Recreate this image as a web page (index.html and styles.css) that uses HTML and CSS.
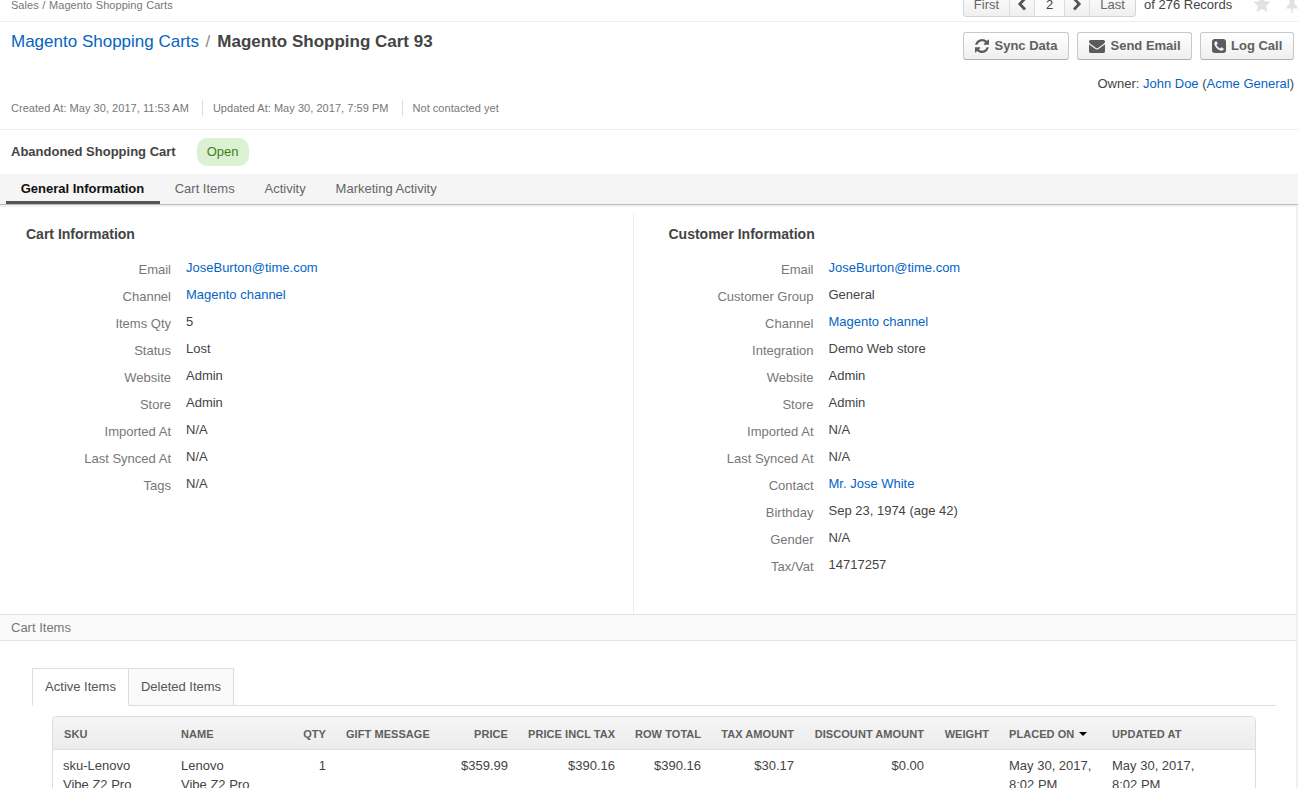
FILE: index.html
```html
<!DOCTYPE html>
<html lang="en">
<head>
<meta charset="utf-8">
<title>Magento Shopping Cart 93</title>
<link rel="stylesheet" href="styles.css">
</head>
<body>
<header class="topbar">
  <nav class="crumbs">Sales / Magento Shopping Carts</nav>
  <div class="pager">
    <div class="pager-group">
      <span class="pg pg-first">First</span>
      <span class="pg pg-arrow"><svg width="10" height="14" viewBox="0 0 10 14"><path d="M8 1.5 2.8 7 8 12.5" fill="none" stroke="#555" stroke-width="2.8"/></svg></span>
      <span class="pg pg-num">2</span>
      <span class="pg pg-arrow"><svg width="10" height="14" viewBox="0 0 10 14"><path d="M2 1.5 7.2 7 2 12.5" fill="none" stroke="#555" stroke-width="2.8"/></svg></span>
      <span class="pg pg-last">Last</span>
    </div>
    <span class="records">of 276 Records</span>
    <svg class="star" width="18" height="18" viewBox="0 0 18 18"><path d="M9 .5 11.6 6l6 .8-4.4 4.2 1.1 6L9 14.100 3.700 17l1.100-6L.4 6.800l6-.8z" fill="#e2e2e2"/></svg>
    <svg class="pin" width="12" height="18" viewBox="0 0 12 18"><path d="M2.500 1h7v1.500h-1v5.500q3 1.500 3.500 4.500H7l-.6 5h-.8l-.6-5H0q.5-3 3.500-4.500V2.500h-1z" fill="#e2e2e2"/></svg>
  </div>
</header>

<section class="headline">
  <div class="heading">
    <h1 class="title"><a>Magento Shopping Carts</a><i>/</i><b>Magento Shopping Cart 93</b></h1>
    <div class="meta"><span>Created At: May 30, 2017, 11:53 AM</span><span>Updated At: May 30, 2017, 7:59 PM</span><span>Not contacted yet</span></div>
  </div>
  <div class="side">
    <div class="actions">
      <button class="btn btn-sync"><svg width="14" height="14" viewBox="0 0 1536 1536"><path d="M1511 928q0 5-1 7-64 268-268 434.500t-478 166.500q-146 0-282.500-55t-243.500-157l-129 129q-19 19-45 19t-45-19-19-45v-448q0-26 19-45t45-19h448q26 0 45 19t19 45-19 45l-137 137q71 66 161 102t187 36q134 0 250-65t186-179q11-17 53-117 8-23 30-23h192q13 0 22.500 9.500t9.500 22.500zm25-800v448q0 26-19 45t-45 19h-448q-26 0-45-19t-19-45 19-45l138-138q-148-137-349-137-134 0-250 65t-186 179q-11 17-53 117-8 23-30 23h-199q-13 0-22.500-9.500t-9.500-22.500v-7q65-268 270-434.500t480-166.500q146 0 284 55.500t245 156.500l130-129q19-19 45-19t45 19 19 45z"/></svg><span>Sync Data</span></button>
      <button class="btn btn-mail"><svg width="16" height="13" viewBox="0 256 1792 1408" preserveAspectRatio="none"><path d="M1792 710v794q0 66-47 113t-113 47h-1472q-66 0-113-47t-47-113v-794q44 49 101 87 362 246 497 345 57 42 92.500 65.500t94.500 48 110 24.500h2q51 0 110-24.500t94.500-48 92.500-65.500q170-123 498-345 57-39 100-87zm0-294q0 79-49 151t-122 123q-376 261-468 325-10 7-42.500 31t-54 38.500-52 32.500-57.500 27-50 9h-2q-23 0-50-9t-57.500-27-52-32.500-54-38.500-42.500-31q-91-64-262-182.500t-205-142.500q-62-42-117-115.500t-55-136.500q0-78 41.500-130t118.500-52h1472q65 0 112.500 47t47.500 113z"/></svg><span>Send Email</span></button>
      <button class="btn btn-call"><svg width="14" height="14" viewBox="128 128 1536 1536"><path d="M1408 1193q0-11-2-16t-18-16.500-40.500-25-47.500-26.500-45.500-25-28.500-15q-5-3-19-13t-25-15-21-5q-15 0-36.500 20.500t-39.500 45-38.500 45-33.500 20.500q-7 0-16.500-3.500t-15.500-6.500-17-9.500-14-8.500q-99-55-170-126.500t-127-170.500q-2-3-8.500-14t-9.500-17-6.500-15.500-3.500-16.500q0-13 20.500-33.500t45-38.500 45-39.500 20.500-36.500q0-10-5-21t-15-25-13-19q-3-6-15-28.500t-25-45.500-26.500-47.500-25-40.500-16.500-18-16-2q-48 0-101 22-46 21-80 94.500t-34 130.500q0 16 2.500 34t5 30.500 9 33 10 29.500 12.500 33 11 30q60 164 216.500 320.500t320.500 216.500q6 2 30 11t33 12.500 29.500 10 33 9 30.500 5 34 2.500q57 0 130.500-34t94.500-80q22-53 22-101zm256-777v960q0 119-84.500 203.500t-203.500 84.500h-960q-119 0-203.500-84.500t-84.500-203.500v-960q0-119 84.500-203.500t203.500-84.500h960q119 0 203.500 84.500t84.500 203.500z"/></svg><span>Log Call</span></button>
    </div>
    <div class="owner">Owner: <a>John Doe</a> (<a>Acme General</a>)</div>
  </div>
</section>

<div class="status"><b>Abandoned Shopping Cart</b><span class="badge">Open</span></div>

<nav class="tabs"><a class="active">General Information</a><a>Cart Items</a><a>Activity</a><a>Marketing Activity</a></nav>

<main class="content">
  <div class="info">
    <section class="panel">
      <h2>Cart Information</h2>
      <dl>
        <dt>Email</dt><dd><a>JoseBurton@time.com</a></dd>
        <dt>Channel</dt><dd><a>Magento channel</a></dd>
        <dt>Items Qty</dt><dd>5</dd>
        <dt>Status</dt><dd>Lost</dd>
        <dt>Website</dt><dd>Admin</dd>
        <dt>Store</dt><dd>Admin</dd>
        <dt>Imported At</dt><dd>N/A</dd>
        <dt>Last Synced At</dt><dd>N/A</dd>
        <dt>Tags</dt><dd>N/A</dd>
      </dl>
    </section>
    <section class="panel">
      <h2>Customer Information</h2>
      <dl>
        <dt>Email</dt><dd><a>JoseBurton@time.com</a></dd>
        <dt>Customer Group</dt><dd>General</dd>
        <dt>Channel</dt><dd><a>Magento channel</a></dd>
        <dt>Integration</dt><dd>Demo Web store</dd>
        <dt>Website</dt><dd>Admin</dd>
        <dt>Store</dt><dd>Admin</dd>
        <dt>Imported At</dt><dd>N/A</dd>
        <dt>Last Synced At</dt><dd>N/A</dd>
        <dt>Contact</dt><dd><a>Mr. Jose White</a></dd>
        <dt>Birthday</dt><dd>Sep 23, 1974 (age 42)</dd>
        <dt>Gender</dt><dd>N/A</dd>
        <dt>Tax/Vat</dt><dd>14717257</dd>
      </dl>
    </section>
  </div>

  <h3 class="section-bar">Cart Items</h3>

  <div class="subtabs"><a class="active">Active Items</a><a class="second">Deleted Items</a></div>

  <div class="grid">
    <table>
      <colgroup><col class="c-sku"><col class="c-name"><col class="c-qty"><col class="c-gift"><col class="c-price"><col class="c-incl"><col class="c-row"><col class="c-tax"><col class="c-disc"><col class="c-weight"><col class="c-placed"><col class="c-updated"></colgroup>
      <thead>
        <tr><th>SKU</th><th>NAME</th><th class="num">QTY</th><th>GIFT MESSAGE</th><th class="num">PRICE</th><th class="num">PRICE INCL TAX</th><th class="num">ROW TOTAL</th><th class="num">TAX AMOUNT</th><th class="num">DISCOUNT AMOUNT</th><th class="num">WEIGHT</th><th>PLACED ON<span class="caret"></span></th><th>UPDATED AT</th></tr>
      </thead>
      <tbody>
        <tr><td>sku-Lenovo<br>Vibe Z2 Pro</td><td>Lenovo<br>Vibe Z2 Pro</td><td class="num">1</td><td></td><td class="num">$359.99</td><td class="num">$390.16</td><td class="num">$390.16</td><td class="num">$30.17</td><td class="num">$0.00</td><td></td><td>May 30, 2017,<br>8:02 PM</td><td>May 30, 2017,<br>8:02 PM</td></tr>
      </tbody>
    </table>
  </div>
</main>
</body>
</html>
```

FILE: styles.css
```css
* { box-sizing: border-box; }
html, body { height: 100%; }
body {
  margin: 0;
  height: 788px;
  overflow: hidden;
  display: flex;
  flex-direction: column;
  background: #fff;
  color: #444;
  font: 13px/20px "Liberation Sans", Arial, sans-serif;
}
a { color: #0564c4; text-decoration: none; }
svg { display: block; flex: none; }

.topbar {
  flex: none;
  height: 22px;
  border-bottom: 1px solid #eee;
  display: flex;
  justify-content: space-between;
  align-items: flex-end;
  padding-left: 11px;
}
.crumbs { font-size: 11px; line-height: 14px; letter-spacing: .03px; word-spacing: .6px; color: #777; margin-bottom: 9px; }
.pager { display: flex; align-items: flex-end; width: 335px; height: 21px; }
.pager-group {
  display: flex;
  width: 173px;
  height: 28px;
  margin-bottom: 4px;
  border: 1px solid #d4d4d4;
  border-radius: 3px;
  background: linear-gradient(#fff, #efefef);
}
.pg {
  display: flex;
  align-items: center;
  justify-content: center;
  padding-top: 3px;
  border-right: 1px solid #dcdcdc;
  color: #666;
}
.pg:last-child { border-right: 0; }
.pg-first { width: 46px; }
.pg-arrow { width: 25px; padding-top: 1px; }
.pg-num { width: 30px; background: #fbfbfb; color: #444; }
.pg-last { flex: 1; }
.records { margin: 0 0 6px 8px; width: 90px; white-space: nowrap; }
.star { margin: 0 0 8px 19px; }
.pin { margin: 0 0 7px 15px; }

.headline {
  flex: none;
  height: 108px;
  border-bottom: 1px solid #eee;
  display: flex;
  justify-content: space-between;
  padding: 0 4px 0 11px;
}
.heading { display: flex; flex-direction: column; justify-content: space-between; padding: 9px 0 13px; }
.title { margin: 0; font-size: 17px; line-height: 21px; font-weight: normal; }
.title i { font-style: normal; color: #888; margin: 0 7px 0 6.500px; }
.meta { display: flex; font-size: 11px; line-height: 16px; letter-spacing: .04px; color: #777; }
.meta span + span { margin-left: 13px; padding-left: 10px; border-left: 1px solid #ddd; }
.side { padding-top: 10px; }
.actions { display: flex; gap: 8px; }
.btn {
  height: 28px;
  display: flex;
  align-items: center;
  gap: 5.500px;
  margin: 0;
  padding: 0 0 0 11px;
  border: 1px solid #c8c8c8;
  border-bottom-color: #b0b0b0;
  border-radius: 3px;
  background: linear-gradient(#fff, #efefef);
  color: #606060;
  font: bold 13px/20px "Liberation Sans", Arial, sans-serif;
  white-space: nowrap;
}
.btn svg { fill: #5c5c5c; }
.btn-mail svg { margin-top: 1px; }
.btn-sync { width: 106px; }
.btn-mail { width: 115px; }
.btn-call { width: 94px; gap: 5px; }
.owner { margin-top: 14px; text-align: right; }

.status { flex: none; height: 44px; display: flex; align-items: center; padding-left: 11px; }
.badge {
  height: 28px;
  width: 52px;
  margin-left: 21px;
  border-radius: 10px;
  background: #dcf1d3;
  color: #3c8210;
  line-height: 28px;
  text-align: center;
}

.tabs {
  flex: none;
  height: 31px;
  display: flex;
  background: #f5f5f5;
  border-bottom: 1px solid #bbb;
  box-shadow: 0 2px 0 #f2f2f2;
  padding-left: 6px;
}
.tabs a { height: 30px; padding: 0 15.200px 0 14.700px; line-height: 29px; color: #666; }
.tabs .active { color: #111; font-weight: bold; border-bottom: 3px solid #555; width: 154px; }

.content { flex: 1; min-height: 0; overflow: hidden; margin-top: 2px; border-right: 2px solid #f0f0f0; }
.info { height: 407px; display: grid; grid-template-columns: 633px 1fr; padding-top: 7px; }
.panel { padding: 10px 0 0 26px; }
.panel + .panel { border-left: 1px solid #eee; padding-left: 34.500px; }
.panel h2 { margin: 0 0 11px; font-size: 14px; line-height: 20px; }
.panel dl { margin: 0; display: grid; grid-template-columns: 145px 1fr; grid-auto-rows: 27px; column-gap: 15px; }
.panel dt { text-align: right; color: #777; padding-top: 5px; }
.panel dd { margin: 0; padding-top: 3px; }

.section-bar {
  margin: 0;
  height: 27px;
  border: solid #e2e2e2;
  border-width: 1px 0;
  background: #fafafa;
  padding-left: 11px;
  color: #777;
  font-size: 13px;
  line-height: 25px;
  font-weight: normal;
}

.subtabs { display: flex; height: 38px; margin: 27px 20px 0 32px; box-shadow: inset 0 -1px #ddd; }
.subtabs a { border: 1px solid #ddd; color: #555; line-height: 35px; text-align: center; }
.subtabs .active { width: 97px; background: #fff; border-bottom-color: #fff; }
.subtabs .second { width: 105px; border-left: 0; background: #fafafa; }

.grid { margin: 10px 40px 0 52px; border: 1px solid #ddd; border-radius: 4px 4px 0 0; overflow: hidden; }
.grid table { width: 1202px; table-layout: fixed; border-collapse: separate; border-spacing: 0; }
.c-sku { width: 118px; }
.c-name { width: 112px; }
.c-qty { width: 53px; }
.c-gift { width: 104px; }
.c-price { width: 78px; }
.c-incl { width: 107px; }
.c-row { width: 86px; }
.c-tax { width: 93px; }
.c-disc { width: 130px; }
.c-weight { width: 65px; }
.c-placed { width: 103px; }
.c-updated { width: 153px; }
.grid th {
  height: 33px;
  padding: 1px 10px 0;
  border-bottom: 1px solid #ddd;
  color: #606060;
  font-size: 11px;
  line-height: 16px;
  letter-spacing: .06px;
  text-align: left;
  white-space: nowrap;
}
.grid th:first-child { padding-left: 11px; }
.grid thead { background: linear-gradient(#f5f5f5, #ececec); }
.grid td { padding: 6px 10px; line-height: 19px; vertical-align: top; white-space: nowrap; }
.grid .num { text-align: right; }
.caret { display: inline-block; margin-left: 5px; vertical-align: 2px; border: 4px solid transparent; border-top-color: #000; border-bottom: 0; }
```
